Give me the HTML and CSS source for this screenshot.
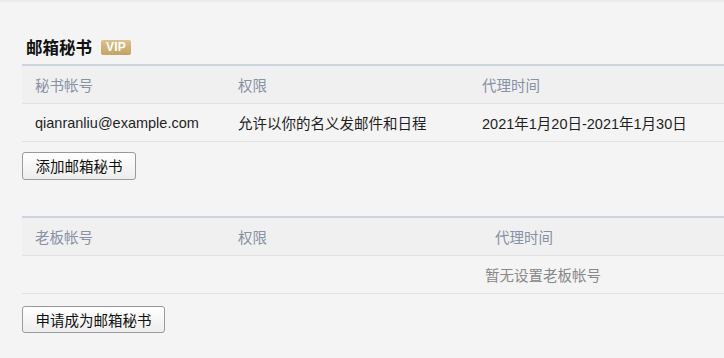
FILE: index.html
```html
<!DOCTYPE html>
<html lang="zh-CN">
<head>
<meta charset="utf-8">
<title>邮箱秘书</title>
<link rel="stylesheet" href="styles.css">
</head>
<body>
<div class="page">
  <div class="title-row">
    <h2 class="title">邮箱秘书</h2>
    <span class="vip">VIP</span>
  </div>

  <div class="table">
    <div class="row head">
      <div class="cell">秘书帐号</div>
      <div class="cell">权限</div>
      <div class="cell">代理时间</div>
    </div>
    <div class="row">
      <div class="cell">qianranliu@example.com</div>
      <div class="cell">允许以你的名义发邮件和日程</div>
      <div class="cell">2021年1月20日-2021年1月30日</div>
    </div>
  </div>
  <button class="btn btn-add">添加邮箱秘书</button>

  <div class="table table-boss">
    <div class="row head">
      <div class="cell">老板帐号</div>
      <div class="cell">权限</div>
      <div class="cell cell-time">代理时间</div>
    </div>
    <div class="row">
      <div class="cell"></div>
      <div class="cell"></div>
      <div class="cell empty">暂无设置老板帐号</div>
    </div>
  </div>
  <button class="btn btn-apply">申请成为邮箱秘书</button>
</div>
</body>
</html>
```

FILE: styles.css
```css
html, body {
  margin: 0;
  padding: 0;
}
body {
  background: #f4f4f4;
  border-top: 2px solid #ebebeb;
  font-family: "Liberation Sans", "Noto Sans CJK SC", sans-serif;
  font-size: 14.5px;
  color: #1f1f1f;
  overflow: hidden;
  height: 356px;
}
.page {
  padding-left: 22px;
}
.title-row {
  display: flex;
  align-items: center;
  padding-top: 34px;
  padding-left: 4px;
  height: 22px;
  margin-bottom: 6px;
}
.title {
  margin: 0;
  font-size: 16.5px;
  font-weight: bold;
  line-height: 22px;
  color: #111;
  font-family: "Noto Sans CJK SC", sans-serif;
}
.vip {
  margin-left: 9px;
  width: 30px;
  height: 15px;
  border-radius: 2px;
  background: linear-gradient(180deg, #dcc28c 0%, #c4a264 100%);
  color: #fff;
  font-family: "Liberation Sans", sans-serif;
  font-weight: bold;
  font-size: 12px;
  line-height: 15px;
  text-align: center;
  letter-spacing: 0.2px;
}
.table {
  border-top: 2px solid #cdd3df;
}
.table-boss {
  margin-top: 36px;
}
.row {
  display: grid;
  grid-template-columns: 203px 244px 1fr;
  height: 37px;
  align-items: center;
  border-bottom: 1px solid #e1e1e1;
}
.row.head {
  background: #f0f0f0;
  color: #8891a5;
}
.cell {
  padding-left: 13px;
  white-space: nowrap;
}
.table-boss .row {
  grid-template-columns: 203px 247px 1fr;
}
.table-boss .cell-time {
  padding-left: 23px;
}
.empty {
  color: #888;
  padding-left: 13px;
}
.btn {
  display: block;
  box-sizing: border-box;
  white-space: nowrap;
  font-family: "Noto Sans CJK SC", sans-serif;
  font-size: 14.5px;
  color: #111;
  background: linear-gradient(180deg, #ffffff 0%, #ededed 100%);
  border: 1px solid #9a9a9a;
  border-radius: 3px;
  height: 28px;
  padding: 0;
  line-height: 26px;
  text-align: center;
}
.btn-add {
  margin-top: 10px;
  width: 114px;
}
.btn-apply {
  margin-top: 12px;
  width: 143px;
  height: 27px;
}
```
